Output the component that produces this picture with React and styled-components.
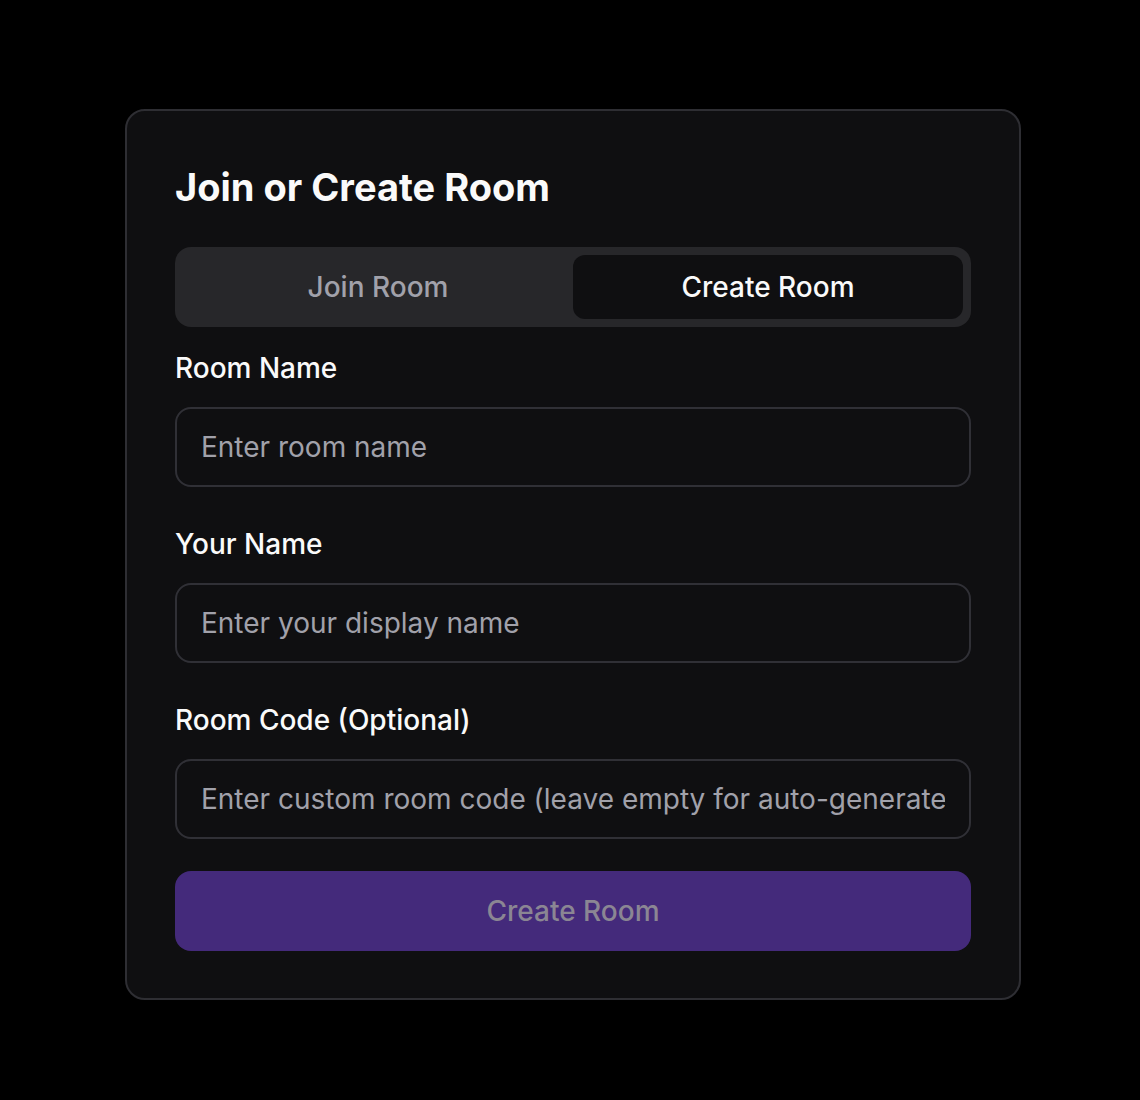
import React, { useState } from "react";
import styled, { createGlobalStyle } from "styled-components";

const Global = createGlobalStyle`
  html, body { margin: 0; padding: 0; background: #000; }
  body { font-family: Inter, "Noto Sans", sans-serif; color: #fafafa; }
  * { box-sizing: border-box; }
`;

const Page = styled.div`
  min-height: 1100px;
  padding: 109px 0 0 125px;
`;

const Card = styled.div`
  width: 896px;
  height: 891px;
  background: #0f0f11;
  border: 2px solid #2e2e33;
  border-radius: 20px;
  padding: 48px 48px 47px 48px;
  display: flex;
  flex-direction: column;
`;

const Title = styled.h2`
  margin: 0 0 32px;
  font-size: 38px;
  line-height: 56px;
  font-weight: 700;
  letter-spacing: 0;
  color: #fafafa;
`;

const TabList = styled.div`
  display: grid;
  grid-template-columns: 1fr 1fr;
  height: 80px;
  padding: 8px;
  background: #27272a;
  border-radius: 16px;
  margin-bottom: 25px;
`;

const Tab = styled.button`
  border: none;
  border-radius: 12px;
  font-family: inherit;
  font-size: 28px;
  font-weight: 500;
  cursor: pointer;
  background: ${(p) => (p.$active ? "#0f0f11" : "transparent")};
  color: ${(p) => (p.$active ? "#fafafa" : "#a1a1aa")};
`;

const Field = styled.div`
  display: flex;
  flex-direction: column;
  gap: 23px;
  margin-bottom: ${(p) => p.$mb}px;
`;

const Label = styled.label`
  font-size: 28px;
  line-height: 32px;
  font-weight: 500;
  color: #fafafa;
`;

const Input = styled.input`
  height: 80px;
  width: 100%;
  background: transparent;
  border: 2px solid #303036;
  border-radius: 16px;
  padding: 0 24px;
  font-family: inherit;
  font-size: 28px;
  color: #fafafa;
  outline: none;
  &::placeholder { color: #a1a1aa; }
`;

const Submit = styled.button`
  height: 80px;
  width: 100%;
  border: none;
  border-radius: 16px;
  background: #442a7b;
  color: #8b8693;
  font-family: inherit;
  font-size: 28px;
  font-weight: 500;
`;

export default function App() {
  const [tab, setTab] = useState("create");
  return (
    <>
      <Global />
      <Page>
        <Card>
          <Title>Join or Create Room</Title>
          <TabList>
            <Tab $active={tab === "join"} onClick={() => setTab("join")}>Join Room</Tab>
            <Tab $active={tab === "create"} onClick={() => setTab("create")}>Create Room</Tab>
          </TabList>
          <Field $mb={41}>
            <Label>Room Name</Label>
            <Input placeholder="Enter room name" />
          </Field>
          <Field $mb={41}>
            <Label>Your Name</Label>
            <Input placeholder="Enter your display name" />
          </Field>
          <Field $mb={32}>
            <Label>Room Code (Optional)</Label>
            <Input placeholder="Enter custom room code (leave empty for auto-generated)" />
          </Field>
          <Submit disabled>Create Room</Submit>
        </Card>
      </Page>
    </>
  );
}
